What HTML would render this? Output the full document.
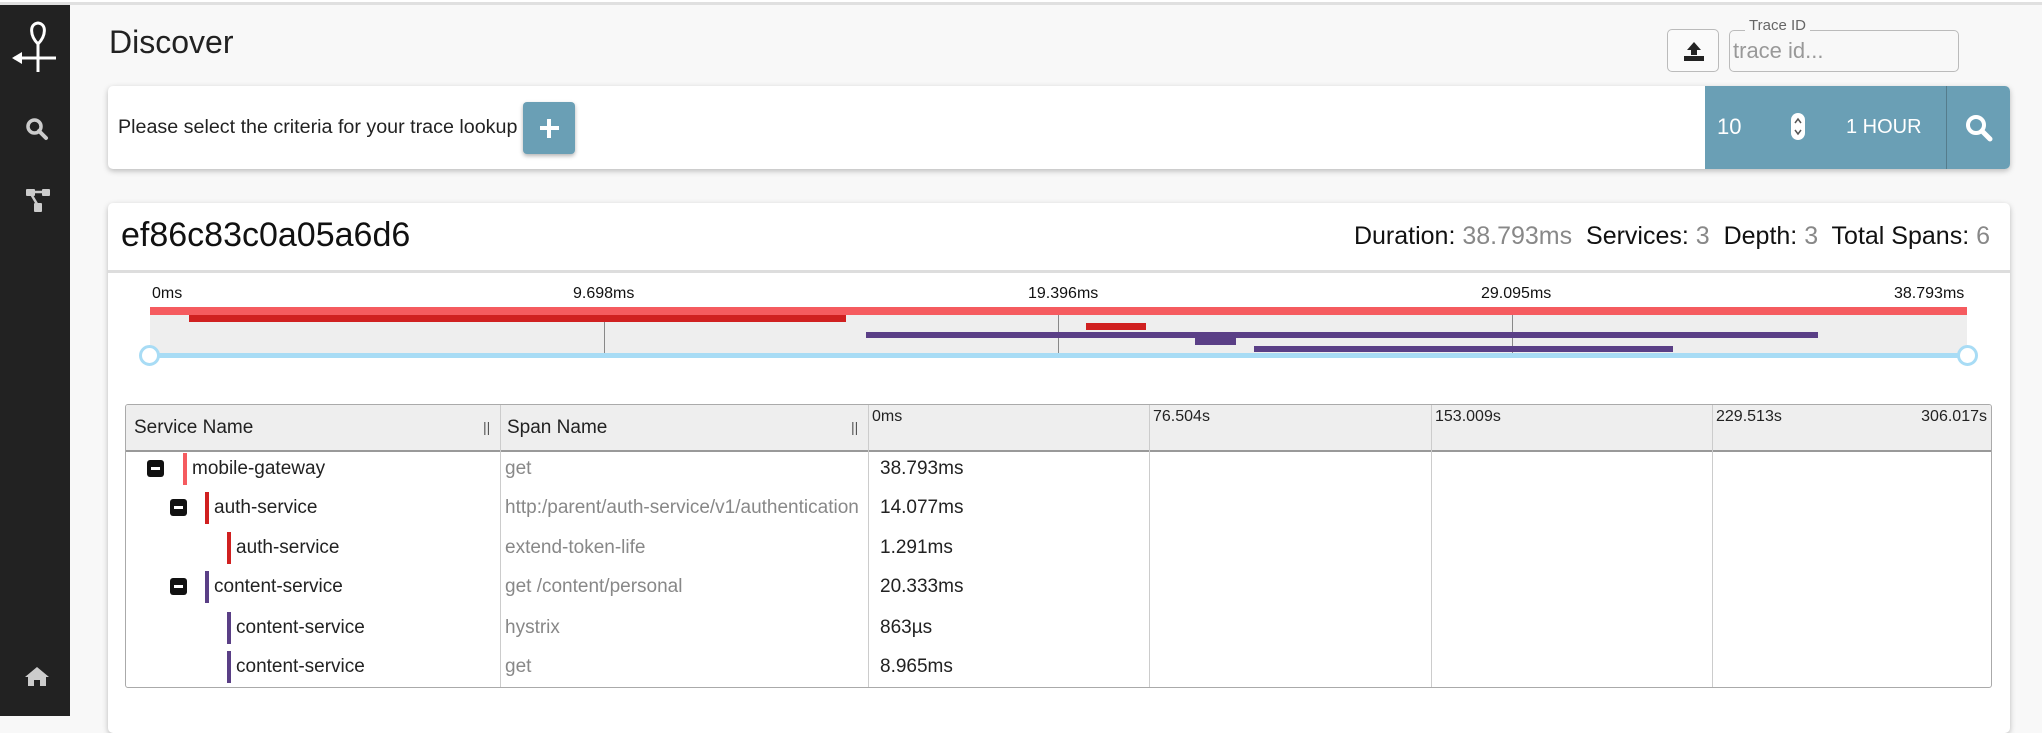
<!DOCTYPE html>
<html><head><meta charset="utf-8"><style>
*{box-sizing:border-box;margin:0;padding:0}
body{width:2042px;height:716px;overflow:hidden;background:#f8f8f8;font-family:"Liberation Sans",sans-serif;position:relative;color:#222}
.a{position:absolute}
.topline{left:0;top:0;width:2042px;height:5px;background:#fff;border-bottom:3px solid #e0e0e0}
.side{left:0;top:5px;width:70px;height:711px;background:#222}
.card{background:#fff;border-radius:5px;box-shadow:0 2px 6px rgba(0,0,0,.25)}
.tl{font-size:16px;top:285px;color:#111}
.row{font-size:19px;height:39px;line-height:39px}
.gray{color:#888}
.minus{width:17px;height:17px;background:#111;border-radius:3px}
.minus:after{content:"";position:absolute;left:4px;top:7px;width:9px;height:3px;background:#fff}
.bar{width:4px;height:32px}
</style></head><body>
<div class="a topline"></div>
<div class="a side">
 <svg class="a" style="left:10px;top:15px" width="50" height="55" viewBox="0 0 50 55"><path d="M28 24 C20 16 19 4 28 3 C37 4 36 16 28 24 Z" fill="none" stroke="#fff" stroke-width="3"/><path d="M28 24 V52 M4 38 H46" stroke="#fff" stroke-width="3"/><path d="M2 38 L12 32 L12 44 Z" fill="#fff"/></svg>
 <svg class="a" style="left:25px;top:112px" width="24" height="24" viewBox="0 0 24 24"><circle cx="9.5" cy="9.5" r="6.5" fill="none" stroke="#ccc" stroke-width="3.5"/><path d="M14 14 L21 21" stroke="#ccc" stroke-width="4" stroke-linecap="round"/></svg>
 <svg class="a" style="left:24px;top:182px" width="28" height="28" viewBox="0 0 28 28"><rect x="2" y="2" width="9" height="7" rx="1" fill="#ccc"/><rect x="18" y="2" width="8" height="7" rx="1" fill="#ccc"/><rect x="10" y="16" width="8" height="9" rx="1" fill="#ccc"/><path d="M10 5 H19 M7 7 L13 17" stroke="#ccc" stroke-width="2.5"/></svg>
 <svg class="a" style="left:24px;top:660px" width="26" height="22" viewBox="0 0 26 22"><path d="M13 2 L1 12 H4 V21 H10 V15 H16 V21 H22 V12 H25 Z" fill="#ccc"/></svg>
</div>
<div class="a" style="left:109px;top:24px;font-size:32px;color:#222">Discover</div>
<div class="a" style="left:1667px;top:29px;width:52px;height:43px;border:1px solid #bbb;border-radius:5px;background:#fafafa">
 <svg class="a" style="left:15px;top:11px" width="22" height="20" viewBox="0 0 22 20"><path d="M11 1 L4 9 H8 V14 H14 V9 H18 Z" fill="#222"/><rect x="1" y="15" width="20" height="5" fill="#222"/></svg>
</div>
<div class="a" style="left:1729px;top:30px;width:230px;height:42px;border:1px solid #bbb;border-radius:5px"></div>
<div class="a" style="left:1745px;top:17px;background:#f8f8f8;padding:0 4px;font-size:15px;color:#666">Trace ID</div>
<div class="a" style="left:1733px;top:38px;font-size:22px;color:#999">trace id...</div>

<div class="a card" style="left:108px;top:86px;width:1902px;height:83px;overflow:hidden">
 <div class="a" style="left:10px;top:30px;font-size:19.7px;color:#222">Please select the criteria for your trace lookup</div>
 <div class="a" style="left:415px;top:16px;width:52px;height:52px;background:#6a9fb5;border-radius:4px;box-shadow:0 2px 4px rgba(0,0,0,.3)">
  <div class="a" style="left:17px;top:24px;width:19px;height:4px;background:#fff"></div><div class="a" style="left:24px;top:17px;width:4px;height:19px;background:#fff"></div></div>
 <div class="a" style="left:1597px;top:0;width:305px;height:83px;background:#6a9fb5">
  <div class="a" style="left:12px;top:28px;font-size:22px;color:#fff">10</div>
  <div class="a" style="left:86px;top:27px;width:14px;height:27px;background:#fff;border-radius:7px">
   <svg class="a" style="left:2px;top:3px" width="10" height="21" viewBox="0 0 10 21"><path d="M2 7 L5 3 L8 7 M2 14 L5 18 L8 14" fill="none" stroke="#555" stroke-width="1.5"/></svg></div>
  <div class="a" style="left:141px;top:30px;font-size:20px;color:#fff">1 HOUR</div>
  <div class="a" style="left:241px;top:0;width:1px;height:83px;background:#557c8c"></div>
  <svg class="a" style="left:259px;top:27px" width="30" height="30" viewBox="0 0 30 30"><circle cx="12" cy="12" r="8" fill="none" stroke="#fff" stroke-width="4"/><path d="M18 18 L26 26" stroke="#fff" stroke-width="5" stroke-linecap="round"/></svg>
 </div>
</div>

<div class="a card" style="left:108px;top:203px;width:1902px;height:530px"></div>
<div class="a" style="left:121px;top:216px;font-size:34px;color:#111">ef86c83c0a05a6d6</div>
<div class="a" style="right:52px;top:222px;font-size:25px;color:#111;white-space:nowrap">Duration: <span class="gray">38.793ms</span>&nbsp; Services: <span class="gray">3</span>&nbsp; Depth: <span class="gray">3</span>&nbsp; Total Spans: <span class="gray">6</span></div>
<div class="a" style="left:108px;top:270px;width:1902px;height:3px;background:#ddd"></div>

<div class="a tl" style="left:152px">0ms</div>
<div class="a tl" style="left:573px">9.698ms</div>
<div class="a tl" style="left:1028px">19.396ms</div>
<div class="a tl" style="left:1481px">29.095ms</div>
<div class="a tl" style="left:1894px">38.793ms</div>
<div class="a" style="left:150px;top:307px;width:1817px;height:47px;background:#eee"></div>
<div class="a" style="left:604px;top:307px;width:1px;height:47px;background:#888"></div>
<div class="a" style="left:1058px;top:307px;width:1px;height:47px;background:#888"></div>
<div class="a" style="left:1512px;top:307px;width:1px;height:47px;background:#888"></div>
<div class="a" style="left:150px;top:307px;width:1817px;height:8px;background:#f55b5f"></div>
<div class="a" style="left:189px;top:315px;width:657px;height:7px;background:#d02020"></div>
<div class="a" style="left:1086px;top:323px;width:60px;height:7px;background:#d02020"></div>
<div class="a" style="left:866px;top:332px;width:952px;height:6px;background:#5a3f86"></div>
<div class="a" style="left:1195px;top:338px;width:41px;height:7px;background:#5a3f86"></div>
<div class="a" style="left:1254px;top:346px;width:419px;height:6px;background:#5a3f86"></div>
<div class="a" style="left:150px;top:353px;width:1817px;height:5px;background:#a8dcf5"></div>
<div class="a" style="left:139px;top:345px;width:21px;height:21px;border:3px solid #a8dcf5;border-radius:50%;background:#fff"></div>
<div class="a" style="left:1957px;top:345px;width:21px;height:21px;border:3px solid #a8dcf5;border-radius:50%;background:#fff"></div>

<div class="a" style="left:125px;top:404px;width:1867px;height:284px;border:1px solid #aaa;border-radius:3px;background:#fff;overflow:hidden">
 <div class="a" style="left:0;top:0;width:1867px;height:47px;background:#eee;border-bottom:2px solid #999"></div>
 <div class="a" style="left:374px;top:0;width:1px;height:284px;background:#ccc"></div>
 <div class="a" style="left:742px;top:0;width:1px;height:284px;background:#ccc"></div>
 <div class="a" style="left:1023px;top:0;width:1px;height:284px;background:#ccc"></div>
 <div class="a" style="left:1305px;top:0;width:1px;height:284px;background:#ccc"></div>
 <div class="a" style="left:1586px;top:0;width:1px;height:284px;background:#ccc"></div>
 <div class="a" style="left:8px;top:12px;font-size:19px">Service Name</div>
 <div class="a" style="left:357px;top:14px;font-size:14px;color:#555">||</div>
 <div class="a" style="left:381px;top:12px;font-size:19px">Span Name</div>
 <div class="a" style="left:725px;top:14px;font-size:14px;color:#555">||</div>
 <div class="a" style="left:746px;top:3px;font-size:16px">0ms</div>
 <div class="a" style="left:1027px;top:3px;font-size:16px">76.504s</div>
 <div class="a" style="left:1309px;top:3px;font-size:16px">153.009s</div>
 <div class="a" style="left:1590px;top:3px;font-size:16px">229.513s</div>
 <div class="a" style="right:4px;top:3px;font-size:16px">306.017s</div>
</div>

<div class="a minus" style="left:147px;top:460px"></div>
<div class="a bar" style="left:183px;top:453px;background:#f55b5f"></div>
<div class="a row" style="left:192px;top:449px">mobile-gateway</div>
<div class="a minus" style="left:170px;top:499px"></div>
<div class="a bar" style="left:205px;top:492px;background:#d02020"></div>
<div class="a row" style="left:214px;top:488px">auth-service</div>
<div class="a bar" style="left:227px;top:532px;background:#d02020"></div>
<div class="a row" style="left:236px;top:528px">auth-service</div>
<div class="a minus" style="left:170px;top:578px"></div>
<div class="a bar" style="left:205px;top:571px;background:#5a3f86"></div>
<div class="a row" style="left:214px;top:567px">content-service</div>
<div class="a bar" style="left:227px;top:612px;background:#5a3f86"></div>
<div class="a row" style="left:236px;top:608px">content-service</div>
<div class="a bar" style="left:227px;top:651px;background:#5a3f86"></div>
<div class="a row" style="left:236px;top:647px">content-service</div>

<div class="a row gray" style="left:505px;top:449px">get</div>
<div class="a row gray" style="left:505px;top:488px;width:360px;white-space:nowrap;overflow:hidden;text-overflow:ellipsis">http:/parent/auth-service/v1/authentication</div>
<div class="a row gray" style="left:505px;top:528px">extend-token-life</div>
<div class="a row gray" style="left:505px;top:567px">get /content/personal</div>
<div class="a row gray" style="left:505px;top:608px">hystrix</div>
<div class="a row gray" style="left:505px;top:647px">get</div>

<div class="a row" style="left:880px;top:449px">38.793ms</div>
<div class="a row" style="left:880px;top:488px">14.077ms</div>
<div class="a row" style="left:880px;top:528px">1.291ms</div>
<div class="a row" style="left:880px;top:567px">20.333ms</div>
<div class="a row" style="left:880px;top:608px">863µs</div>
<div class="a row" style="left:880px;top:647px">8.965ms</div>
</body></html>
